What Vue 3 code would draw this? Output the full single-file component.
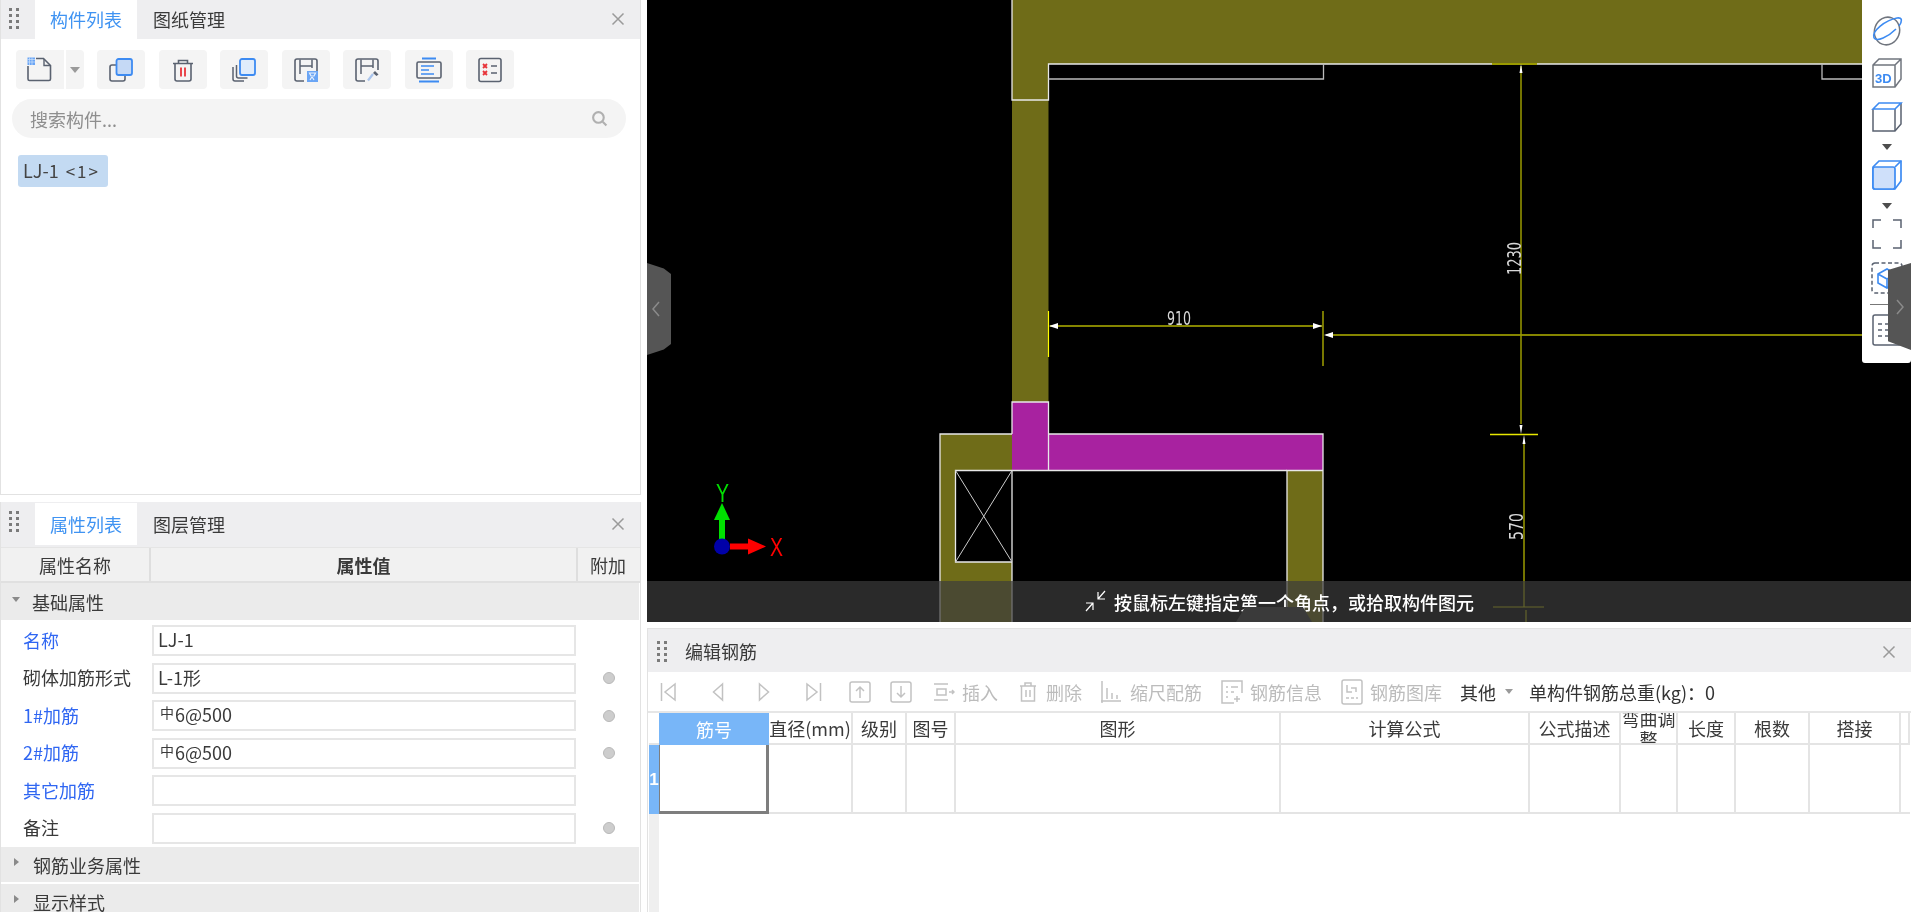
<script setup>
const tools = ['copy', 'trash', 'stack', 'hsave', 'hpen', 'align', 'list']
const props = [
  { name: '名称', blue: true, value: 'LJ-1', dot: false },
  { name: '砌体加筋形式', blue: false, value: 'L-1形', dot: true },
  { name: '1#加筋', blue: true, value: '6@500', bar: true, dot: true },
  { name: '2#加筋', blue: true, value: '6@500', bar: true, dot: true },
  { name: '其它加筋', blue: true, value: '', dot: false },
  { name: '备注', blue: false, value: '', dot: true }
]
const columns = ['筋号', '直径(mm)', '级别', '图号', '图形', '计算公式', '公式描述', '弯曲调整', '长度', '根数', '搭接', '']
</script>

<template>
  <div class="page">
    <aside class="left">
      <section class="panel list-panel">
        <header class="tabbar">
          <span class="grip"><i v-for="n in 8" :key="n"></i></span>
          <span class="tab active">构件列表</span>
          <span class="tab">图纸管理</span>
          <svg class="close" viewBox="0 0 14 14"><path d="M1.5 1.5l11 11M12.5 1.5l-11 11" /></svg>
        </header>
        <div class="tools">
          <div class="tbtn main">
            <svg viewBox="0 0 28 28" width="28" height="28" fill="none">
              <path d="M10 2.500H17.500L24.500 9.500V23A1.500 1.500 0 0 1 23 24.500H3.500A1.500 1.500 0 0 1 2 23V10" stroke="#5a6270" stroke-width="1.600" />
              <path d="M18 3v6.500h6" stroke="#5a6270" stroke-width="1.400" />
              <rect x="1.500" y="1.500" width="7.500" height="7.500" fill="#6aa5f5" />
              <path d="M1.500 3.500h7.500M1.500 6h7.500M3.500 1.500v7.500M6 1.500v7.500" stroke="#cfe2fb" stroke-width=".7" />
            </svg>
          </div>
          <div class="tbtn arrow"><i class="caret"></i></div>
          <div v-for="t in tools" :key="t" class="tbtn">
            <svg viewBox="0 0 28 28" width="28" height="28" fill="none">
              <template v-if="t === 'copy'">
                <rect x="3" y="9" width="15" height="16" rx="2" stroke="#5a6270" stroke-width="1.6" />
                <rect x="9.5" y="3" width="15.5" height="16" rx="2" fill="#c5d9f5" stroke="#3d8bf2" stroke-width="1.8" />
              </template>
              <template v-else-if="t === 'trash'">
                <path d="M6 8v15a2 2 0 0 0 2 2h12a2 2 0 0 0 2-2V8" stroke="#5a6270" stroke-width="1.6" />
                <path d="M4 7.5h20M9.500 7V4.500h9V7" stroke="#5a6270" stroke-width="1.6" />
                <path d="M12 11.500v9M16 11.500v9" stroke="#e8343a" stroke-width="1.8" />
              </template>
              <template v-else-if="t === 'stack'">
                <path d="M3 11v12a2 2 0 0 0 2 2h9" stroke="#5a6270" stroke-width="1.5" />
                <path d="M6.500 9v11a2 2 0 0 0 2 2h9" stroke="#5a6270" stroke-width="1.5" />
                <rect x="10" y="3" width="15" height="16" rx="2" fill="#e0ecfb" stroke="#3d8bf2" stroke-width="1.8" />
              </template>
              <template v-else-if="t === 'hsave'">
                <path d="M12 25H5a2 2 0 0 1-2-2V5a2 2 0 0 1 2-2h18a2 2 0 0 1 2 2v10" stroke="#5a6270" stroke-width="1.6" />
                <path d="M8 3.500V18M20 3.500V12M8 10h12" stroke="#5a6270" stroke-width="1.5" />
                <rect x="15" y="15" width="11" height="11" fill="#6aa5f5" />
                <path d="M17.500 17h6l-1.500 3h-3zM18 24l1.500-2.500h1L22 24" stroke="#e8f1fd" stroke-width="1.200" />
              </template>
              <template v-else-if="t === 'hpen'">
                <path d="M12 25H5a2 2 0 0 1-2-2V5a2 2 0 0 1 2-2h18a2 2 0 0 1 2 2v9" stroke="#5a6270" stroke-width="1.6" />
                <path d="M8 3.500V18M20 3.500V12M8 10h12" stroke="#5a6270" stroke-width="1.5" />
                <path d="M22 15l3.500 3.500-2 1.500-3.500-3z" fill="#5a6270" />
                <path d="M20 18l-5 6.500" stroke="#a9c4ec" stroke-width="2.200" />
              </template>
              <template v-else-if="t === 'align'">
                <path d="M7 2.500h14M4 25.500h20" stroke="#3d8bf2" stroke-width="1.800" />
                <rect x="2" y="6" width="24" height="16" rx="1.500" stroke="#5a6270" stroke-width="1.600" />
                <path d="M6 10h13M6 14h8M6 18h13" stroke="#3d8bf2" stroke-width="1.600" />
              </template>
              <template v-else>
                <rect x="3" y="2.500" width="22" height="23" rx="2" stroke="#5a6270" stroke-width="1.600" />
                <path d="M7 8l4 4M11 8l-4 4M7 15l4 4M11 15l-4 4" stroke="#e8343a" stroke-width="1.800" />
                <path d="M15 10h6M15 17h6" stroke="#5a6270" stroke-width="1.600" />
              </template>
            </svg>
          </div>
        </div>
        <div class="search">
          <span>搜索构件...</span>
          <svg viewBox="0 0 16 16" width="17" height="17" fill="none" stroke="#b0b0b0" stroke-width="2"><circle cx="7" cy="7" r="5" /><path d="M11 11l3.500 3.500" /></svg>
        </div>
        <div class="chip">LJ-1 <small>&lt;1&gt;</small></div>
      </section>

      <section class="panel prop-panel">
        <header class="tabbar tall">
          <span class="grip"><i v-for="n in 8" :key="n"></i></span>
          <span class="tab active">属性列表</span>
          <span class="tab">图层管理</span>
          <svg class="close" viewBox="0 0 14 14"><path d="M1.5 1.5l11 11M12.5 1.5l-11 11" /></svg>
        </header>
        <div class="prop-head">
          <span>属性名称</span>
          <span class="strong">属性值</span>
          <span>附加</span>
        </div>
        <div class="group first"><i class="tri down"></i>基础属性</div>
        <div class="rows">
          <div v-for="p in props" :key="p.name" class="prow">
            <span class="pname" :class="{ blue: p.blue }">{{ p.name }}</span>
            <span class="pvalue"><sup v-if="p.bar">中</sup>{{ p.value }}</span>
            <span class="pdot"><i v-if="p.dot"></i></span>
          </div>
        </div>
        <div class="group second"><i class="tri"></i>钢筋业务属性</div>
        <div class="group third"><i class="tri"></i>显示样式</div>
      </section>
    </aside>

    <main class="right">
      <div class="canvas">
        <svg class="cad" width="1264" height="622" viewBox="647 0 1264 622">
          <path d="M1012 0H1862V64H1048.500V100H1012Z" fill="#6f6c18" />
          <rect x="1012" y="100" width="36.500" height="302" fill="#6f6c18" />
          <path d="M940 434H1012V470.500H955.500V562H1012V622H940Z" fill="#6f6c18" />
          <rect x="1287" y="470.500" width="36" height="152" fill="#6f6c18" />
          <path d="M1012 402H1048.500V434H1323V470.500H1012Z" fill="#a822a0" />
          <g fill="none" stroke="#e8e8e8" stroke-width="1.300">
            <path d="M1012 0V100H1048.500V64H1862" />
            <path d="M1048.500 79H1323.500V64M1822 64V79H1862" stroke="#bbb" />
            <path d="M1012 434V402H1048.500V434M1048.500 470.500V434H1323V470.500H1287V622M1323 470.500V622" />
            <path d="M1012 434H940V622M1012 470.500H955.500V562H1012M1012 470.500V622M1012 470.500H1287" />
            <path d="M955.500 470.500L1012 562M1012 470.500L955.500 562" stroke="#ccc" stroke-width="1" />
          </g>
          <g fill="none" stroke="#858500" stroke-width="2">
            <path d="M1050 326H1322M1326 335H1862" />
            <path d="M1521 66V424M1524 442V607M1526 610V622" stroke-width="1.500" stroke="#9a9a00" />
            <path d="M1492 64H1537" stroke-width="2" stroke="#9a9a00" />
          </g>
          <path d="M1048.500 311V357" stroke="#ffff00" stroke-width="1.200" />
          <path d="M1323 311V366" stroke="#c8c800" stroke-width="1.200" />
          <path d="M1490 434.500H1538" stroke="#e8e800" stroke-width="1.400" />
          <path d="M1493 607H1544" stroke="#c8c800" stroke-width="1.200" />
          <path d="M1049 326l9-3v6zM1322 326l-9-3v6zM1324 335l9-3v6zM1521 64l-1.500 9h3zM1521 434l-1.500-9h3zM1524 435l-1.500 9h3z" fill="#fff" />
          <text x="1167" y="325" class="dim" textLength="24" lengthAdjust="spacingAndGlyphs">910</text>
          <text transform="translate(1521 275) rotate(-90)" class="dim" textLength="33" lengthAdjust="spacingAndGlyphs">1230</text>
          <text transform="translate(1523 540) rotate(-90)" class="dim" textLength="27" lengthAdjust="spacingAndGlyphs">570</text>
          <path d="M722 540V520" stroke="#00e000" stroke-width="6" />
          <path d="M722 503l8 17h-16z" fill="#00e000" />
          <path d="M730 546.500H752" stroke="#ff0000" stroke-width="6" />
          <path d="M766 546.500l-18-8v16z" fill="#ff0000" />
          <ellipse cx="722" cy="546.500" rx="8" ry="8" fill="#0000a8" />
          <text x="716" y="502" class="axis green" textLength="13" lengthAdjust="spacingAndGlyphs">Y</text>
          <text x="770" y="556" class="axis red" textLength="13" lengthAdjust="spacingAndGlyphs">X</text>
        </svg>

        <div class="handle left-handle"><svg viewBox="0 0 10 18" width="10" height="18" fill="none" stroke="#8a8a8a" stroke-width="1.500"><path d="M8 2L2 9l6 7" /></svg></div>

        <div class="view-tools">
          <svg viewBox="0 0 34 34" width="34" height="34" fill="none">
            <ellipse cx="17" cy="17" rx="12.500" ry="14" transform="rotate(20 17 17)" stroke="#70757e" stroke-width="1.500" />
            <path d="M4 24C1 17 16 6 27 4c6-1 5 4 2 8" stroke="#3d8bf2" stroke-width="1.600" />
            <path d="M4 24c3 4 14-1 22-9" stroke="#3d8bf2" stroke-width="1.600" />
          </svg>
          <svg viewBox="0 0 34 34" width="34" height="34" fill="none">
            <path d="M3 9l6-6h22v20l-6 8H3zM3 9h22v22M25 9l6-6" stroke="#70757e" stroke-width="1.500" />
            <text x="5" y="27" class="three">3D</text>
          </svg>
          <svg viewBox="0 0 34 34" width="34" height="34" fill="none">
            <path d="M3 9v22h22l6-7V3" stroke="#5a6270" stroke-width="1.500" />
            <path d="M25 9v22" stroke="#5a6270" stroke-width="1.500" />
            <path d="M3 9l6-6h22l-6 6zM3 9h22" stroke="#3d8bf2" stroke-width="1.600" />
          </svg>
          <i class="caret dark"></i>
          <svg viewBox="0 0 34 34" width="34" height="34" fill="none">
            <path d="M3 9l6-6h22v20l-6 8H5a2 2 0 0 1-2-2z" fill="#fff" stroke="#3d8bf2" stroke-width="1.700" />
            <rect x="3" y="9" width="22" height="22" rx="2" fill="#cfe0fa" stroke="#3d8bf2" stroke-width="1.700" />
            <path d="M25 9l6-6" stroke="#3d8bf2" stroke-width="1.700" />
          </svg>
          <i class="caret dark"></i>
          <svg viewBox="0 0 34 34" width="34" height="34" fill="none" stroke="#5a6270" stroke-width="1.500">
            <path d="M11 3H3v8M23 3h8v8M11 31H3v-8M23 31h8v-8" />
          </svg>
          <svg viewBox="0 0 34 34" width="34" height="34" fill="none">
            <rect x="2" y="2" width="30" height="30" rx="3" stroke="#5a6270" stroke-width="1.500" stroke-dasharray="4 2.500" />
            <path d="M8 13l9-5 9 5v9l-9 5-9-5zM8 13l9 5 9-5M17 18v9" stroke="#3d8bf2" stroke-width="1.600" />
          </svg>
          <i class="rule"></i>
          <svg viewBox="0 0 34 34" width="34" height="34" fill="none" stroke="#5a6270" stroke-width="1.500">
            <rect x="3" y="2" width="28" height="30" rx="2" />
            <path d="M8 11h4M15 11h12M8 17h4M15 17h12M8 23h4M15 23h12" />
          </svg>
        </div>
        <div class="handle right-handle"><svg viewBox="0 0 10 18" width="10" height="18" fill="none" stroke="#8a8a8a" stroke-width="1.500"><path d="M2 2l6 7-6 7" /></svg></div>

        <div class="status">
          <svg viewBox="0 0 24 24" width="24" height="24" fill="none" stroke="#fff" stroke-width="1.200">
            <path d="M21 2l-7 8M14 3v7h7M2 22l7-8M9 21v-7H2" />
          </svg>
          <span>按鼠标左键指定第一个角点，或拾取构件图元</span>
          <i class="status-tab"></i>
        </div>
      </div>

      <section class="panel rebar">
        <header class="rebar-title">
          <span class="grip"><i v-for="n in 8" :key="n"></i></span>
          <span class="title">编辑钢筋</span>
          <svg class="close" viewBox="0 0 14 14"><path d="M1.5 1.5l11 11M12.5 1.5l-11 11" /></svg>
        </header>
        <div class="rebar-tools">
          <svg class="nav" viewBox="0 0 17 22" width="17" height="22"><path d="M1.500 2v18M15 3L5 11l10 8z" /></svg>
          <svg class="nav n2" viewBox="0 0 12 22" width="12" height="22"><path d="M10.500 3L1.500 11l9 8z" /></svg>
          <svg class="nav n3" viewBox="0 0 12 22" width="12" height="22"><path d="M1.500 3l9 8-9 8z" /></svg>
          <svg class="nav n4" viewBox="0 0 17 22" width="17" height="22"><path d="M15.500 2v18M2 3l10 8-10 8z" /></svg>
          <svg class="nav n5" viewBox="0 0 22 22" width="22" height="22"><rect x="1" y="1" width="20" height="20" rx="2" /><path d="M11 17V6M7 10l4-4 4 4" /></svg>
          <svg class="nav n6" viewBox="0 0 22 22" width="22" height="22"><rect x="1" y="1" width="20" height="20" rx="2" /><path d="M11 5v11M7 12l4 4 4-4" /></svg>
          <svg class="nav n7" viewBox="0 0 22 22" width="22" height="22"><path d="M15 3H1M15 19H1M4 8h9v6H4zM16 11h5M19 9l2 2-2 2" /></svg>
          <span class="dis t1">插入</span>
          <svg class="nav n8" viewBox="0 0 20 22" width="20" height="22"><path d="M2 5h16M7 5V2h6v3M3.500 5v15h13V5M8 9v7M12 9v7" /></svg>
          <span class="dis t2">删除</span>
          <svg class="nav n9" viewBox="0 0 22 24" width="22" height="24"><path d="M2 1v22M7 8v11M12 13v6M17 15v4M1 21h20" /></svg>
          <span class="dis t3">缩尺配筋</span>
          <svg class="nav n10" viewBox="0 0 24 26" width="24" height="26"><path d="M22 14V2H2v22h12M6 8h2M11 8h7M6 13h2M11 13h3M6 18h2M17 17v6M14 20h6" /></svg>
          <span class="dis t4">钢筋信息</span>
          <svg class="nav n11" viewBox="0 0 24 26" width="24" height="26"><rect x="2" y="1" width="20" height="24" rx="2" /><path d="M7 6v7h5M16 13v-4h-5M6 19h3M11 19h3M16 19h2" /></svg>
          <span class="dis t5">钢筋图库</span>
          <span class="other">其他</span>
          <i class="caret small"></i>
          <span class="total">单构件钢筋总重(kg)：0</span>
        </div>
        <div class="grid-table">
          <div class="corner"></div>
          <div v-for="(c, i) in columns" :key="i" class="th" :class="{ hot: i === 0 }">
            <span>{{ c }}</span>
          </div>
          <div class="rowno">1</div>
          <div v-for="(c, i) in columns" :key="'d' + i" class="td" :class="{ selected: i === 0 }"></div>
        </div>
      </section>
    </main>
  </div>
</template>

<style>
html, body { margin: 0; background: #fff; overflow: hidden; }
</style>

<style scoped>
* { box-sizing: border-box; }
.page {
  width: 1919px; height: 912px; display: flex; overflow: hidden; background: #fff;
  font-family: "Noto Sans CJK SC", "Noto Sans", sans-serif; color: #3a3a3a; font-size: 18px;
  filter: blur(.35px);
}
.left { width: 647px; flex: none; padding-right: 6px; display: flex; flex-direction: column; }
.panel { background: #fff; }
.list-panel { height: 495px; border: 1px solid #e2e2e2; border-top: 0; }
.prop-panel { margin-top: 7px; height: 410px; overflow: hidden; border-left: 1px solid #e2e2e2; border-right: 1px solid #e2e2e2; }

.tabbar { height: 39px; background: #eeeef0; display: flex; align-items: stretch; position: relative; }
.tabbar.tall { height: 45px; padding: 1px 0 2px; }
.grip { width: 12px; height: 22px; margin: 8px 14px 0 8px; flex: none; display: grid; grid-template-columns: 3px 3px; column-gap: 4px; row-gap: 3px; align-content: start; }
.grip i { height: 3px; background: #7b7b7b; }
.tab { width: 102px; display: flex; align-items: center; justify-content: center; font-size: 18px; color: #3a3a3a; padding-bottom: 2px; }
.tall .tab { padding-bottom: 0; }
.tab.active { background: #fff; color: #3f93f2; }
.tab + .tab { width: 104px; }
.close { position: absolute; right: 15px; top: 12px; width: 14px; height: 14px; fill: none; stroke: #9a9a9a; stroke-width: 1.5; }
.tall .close { top: 15px; }

.tools { display: flex; padding: 11px 0 0 15px; gap: 13.5px; height: 50px; }
.tbtn { width: 48px; height: 39px; background: #f4f4f4; border-radius: 4px; display: flex; align-items: center; justify-content: center; }
.tbtn.main { border-radius: 4px 0 0 4px; width: 48px; margin-right: -12px; }
.tbtn.arrow { width: 18px; border-radius: 0 4px 4px 0; }
.caret { width: 0; height: 0; border: 5px solid transparent; border-top: 6px solid #9a9a9a; border-bottom: 0; display: block; }
.search { margin: 10px 0 0 11px; width: 614px; height: 39px; border-radius: 20px; background: #f4f4f4; display: flex; align-items: center; justify-content: space-between; padding: 0 18px; color: #8e8e8e; font-size: 18px; }
.chip { margin: 17px 0 0 17px; width: 90px; height: 32px; border-radius: 3px; background: #c3daf2; font-size: 18px; line-height: 31px; padding-left: 5px; color: #444; white-space: nowrap; }
.chip small { font-size: 17px; margin-left: 3px; letter-spacing: 2px; }

.prop-head { height: 36px; display: grid; grid-template-columns: 150px 427px 60px; background: #f1f1f1; border-top: 1px solid #e5e5e5; border-bottom: 2px solid #e0e0e0; font-size: 18px; }
.prop-head span { display: flex; align-items: center; justify-content: center; border-right: 2px solid #dedede; padding-top: 1px; }
.prop-head span:last-child { border-right: 0; }
.prop-head .strong { font-weight: 700; }
.group { height: 35px; background: #ebebeb; display: flex; align-items: center; font-size: 18px; padding-left: 13px; width: 638px; gap: 13px; }
.group.first { height: 37px; }
.tri { width: 0; height: 0; border: 4px solid transparent; border-left: 5px solid #8a8a8a; border-right: 0; flex: none; margin-top: -5px; }
.tri.down { border: 4px solid transparent; border-top: 5px solid #8a8a8a; border-bottom: 0; margin-left: -2px; margin-right: -1px; }
.tri:not(.down) { margin-right: 1px; }
.rows { padding: 2px 0 0; }
.prow { height: 37.5px; display: grid; grid-template-columns: 151px 424px 62px; align-items: center; }
.pname { padding: 0 0 2px 22px; font-size: 18px; white-space: nowrap; }
.pname.blue { color: #2f66f2; }
.pvalue { height: 31px; border: 2px solid #e6e6e6; background: #fff; padding-left: 4px; line-height: 25px; font-size: 18px; white-space: nowrap; }
.pvalue sup { font-size: 14px; line-height: 0; vertical-align: 4px; margin-right: 1px; margin-left: 2px; }
.pdot { display: flex; justify-content: center; }
.pdot i { width: 12px; height: 12px; border-radius: 50%; background: #cdcdcd; border: 1px solid #b9b9b9; margin-left: 3px; }
.group.third { margin-top: 2px; }

.right { flex: 1; min-width: 0; display: flex; flex-direction: column; }
.canvas { width: 1264px; height: 622px; background: #000; position: relative; overflow: hidden; flex: none; }
.cad { position: absolute; left: 0; top: 0; }
.dim { font: 19px "DejaVu Sans", sans-serif; fill: #d8d8d8; }
.axis { font: 25px "Liberation Sans", sans-serif; }
.green { fill: #00e000; }
.red { fill: #ff0000; }
.three { font: 700 13px "Liberation Sans", sans-serif; fill: #3d8bf2; }
.handle { position: absolute; width: 24px; height: 92px; background: #555; display: flex; align-items: center; justify-content: center; }
.left-handle { left: 0; top: 263px; border-radius: 0 5px 5px 0; clip-path: polygon(0 0, 70% 6%, 100% 12%, 100% 88%, 70% 94%, 0 100%); padding-right: 6px; }
.view-tools { position: absolute; left: 1215px; top: 0; width: 49px; height: 363px; background: #fff; border-radius: 0 0 3px 3px; display: flex; flex-direction: column; align-items: center; padding-top: 14px; }
.view-tools > * { flex: none; }
.view-tools > :nth-child(2) { margin-top: 8px; }
.view-tools > :nth-child(3) { margin-top: 10px; }
.view-tools > :nth-child(4) { margin-top: 10px; }
.view-tools > :nth-child(5) { margin-top: 8px; }
.view-tools > :nth-child(6) { margin-top: 11px; }
.view-tools > :nth-child(7) { margin-top: 8px; }
.view-tools > :nth-child(8) { margin-top: 10px; }
.view-tools > :nth-child(9) { margin-top: 9px; }
.view-tools > :nth-child(10) { margin-top: 8px; }
.caret.dark { border-top-color: #4d4d4d; margin-left: 1px; }
.rule { display: block; width: 34px; height: 1px; background: #777; }
.right-handle { left: 1241px; top: 263px; width: 23px; height: 87px; clip-path: polygon(0 8%, 100% 0, 100% 100%, 60% 96%, 0 90%); }
.status { position: absolute; left: 0; right: 0; top: 581px; height: 41px; background: rgba(60, 60, 60, .7); display: flex; align-items: center; padding-left: 437px; color: #fff; font-size: 18px; font-weight: 500; gap: 6px; }
.status svg { margin-top: -2px; }
.status-tab { position: absolute; left: 589px; bottom: 0; width: 76px; height: 15px; background: #3a3a3a; clip-path: polygon(12% 0, 88% 0, 100% 100%, 0 100%); }

.rebar { margin-top: 6px; width: 1264px; height: 284px; border-top: 1px solid #e2e2e2; border-left: 1px solid #e2e2e2; background: #fff; }
.rebar-title { height: 43px; background: #eeeef0; display: flex; align-items: center; position: relative; }
.rebar-title .grip { margin: 3px 14px 0 9px; }
.rebar-title .title { margin-left: 2px; font-size: 18px; }
.rebar-title .close { right: 15px; top: 16px; }
.rebar-tools { height: 41px; display: flex; align-items: center; position: relative; padding-left: 12px; border-bottom: 2px solid #e6e6e6; }
.nav { flex: none; fill: none; stroke: #c2c2c2; stroke-width: 1.500; }
.n2 { margin-left: 35px; }
.n3 { margin-left: 34px; }
.n4 { margin-left: 35px; }
.n5 { margin-left: 27px; }
.n6 { margin-left: 19px; }
.n7 { margin-left: 21px; }
.dis { color: #bcbcbc; font-size: 18px; white-space: nowrap; }
.t1 { margin-left: 7px; }
.n8 { margin-left: 20px; }
.t2 { margin-left: 8px; }
.n9 { margin-left: 18px; }
.t3 { margin-left: 8px; }
.n10 { margin-left: 18px; }
.t4 { margin-left: 6px; }
.n11 { margin-left: 18px; }
.t5 { margin-left: 6px; }
.other { margin-left: 18px; font-size: 18px; color: #333; }
.caret.small { margin-left: 9px; border-width: 4px; border-top-width: 5px; border-bottom-width: 0; }
.total { margin-left: 16px; font-size: 18px; color: #333; white-space: nowrap; }
.grid-table { display: grid; grid-template-columns: 10px 110px 84px 54px 49px 325px 249px 91px 57px 58px 74px 91px 9px; grid-template-rows: 32px 69px; margin-left: 1px; position: relative; }
.grid-table::after { content: ""; position: absolute; left: 0; top: 101px; width: 10px; height: 100px; background: #efefef; }
.corner { background: #fff; border-bottom: 2px solid #e4e4e4; }
.th { display: flex; align-items: center; justify-content: center; overflow: hidden; border-right: 2px solid #e4e4e4; border-bottom: 2px solid #e4e4e4; font-size: 18px; line-height: 21px; text-align: center; white-space: nowrap; }
.th:nth-child(9) { white-space: normal; word-break: break-all; padding-top: 1px; }
.th:nth-child(9) span { width: 54px; display: block; flex: none; }
.th.hot { background: #78b6f8; color: #fff; border-right: 0; border-bottom: 0; }
.th:last-child { border-right: 0; }
.rowno { background: #78b6f8; color: #fff; font: 700 17px "Liberation Sans", sans-serif; display: flex; align-items: center; justify-content: center; }
.td { border-right: 2px solid #e4e4e4; border-bottom: 2px solid #e4e4e4; background: #fff; }
.td.selected { border-right: 3px solid #7e7e7e; border-bottom: 3px solid #7e7e7e; border-left: 1px solid #7e7e7e; }
.td:last-child { border-right: 0; }
</style>
